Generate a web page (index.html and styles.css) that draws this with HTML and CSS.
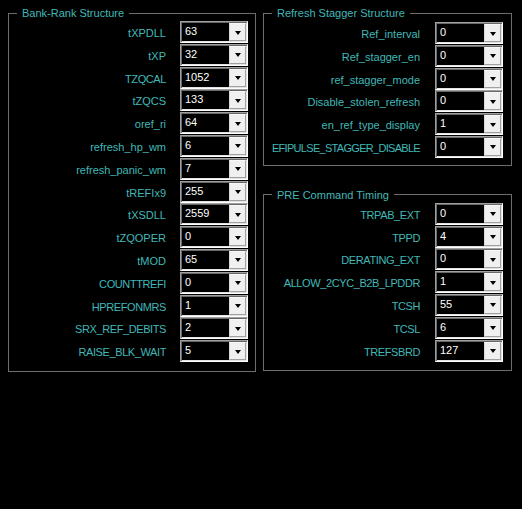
FILE: index.html
```html
<!DOCTYPE html>
<html>
<head>
<meta charset="utf-8">
<link rel="stylesheet" href="styles.css">
</head>
<body>
<div class="page">
  <fieldset class="group group-left">
    <legend>Bank-Rank Structure</legend>
    <div class="row"><span class="label">tXPDLL</span><div class="combo"><span class="value">63</span><span class="btn"><i class="tri"></i></span></div></div>
    <div class="row"><span class="label">tXP</span><div class="combo"><span class="value">32</span><span class="btn"><i class="tri"></i></span></div></div>
    <div class="row"><span class="label caps">TZQCAL</span><div class="combo"><span class="value">1052</span><span class="btn"><i class="tri"></i></span></div></div>
    <div class="row"><span class="label">tZQCS</span><div class="combo"><span class="value">133</span><span class="btn"><i class="tri"></i></span></div></div>
    <div class="row"><span class="label">oref_ri</span><div class="combo"><span class="value">64</span><span class="btn"><i class="tri"></i></span></div></div>
    <div class="row"><span class="label">refresh_hp_wm</span><div class="combo"><span class="value">6</span><span class="btn"><i class="tri"></i></span></div></div>
    <div class="row"><span class="label">refresh_panic_wm</span><div class="combo"><span class="value">7</span><span class="btn"><i class="tri"></i></span></div></div>
    <div class="row"><span class="label">tREFIx9</span><div class="combo"><span class="value">255</span><span class="btn"><i class="tri"></i></span></div></div>
    <div class="row"><span class="label">tXSDLL</span><div class="combo"><span class="value">2559</span><span class="btn"><i class="tri"></i></span></div></div>
    <div class="row"><span class="label">tZQOPER</span><div class="combo"><span class="value">0</span><span class="btn"><i class="tri"></i></span></div></div>
    <div class="row"><span class="label">tMOD</span><div class="combo"><span class="value">65</span><span class="btn"><i class="tri"></i></span></div></div>
    <div class="row"><span class="label caps">COUNTTREFI</span><div class="combo"><span class="value">0</span><span class="btn"><i class="tri"></i></span></div></div>
    <div class="row"><span class="label caps">HPREFONMRS</span><div class="combo"><span class="value">1</span><span class="btn"><i class="tri"></i></span></div></div>
    <div class="row"><span class="label caps">SRX_REF_DEBITS</span><div class="combo"><span class="value">2</span><span class="btn"><i class="tri"></i></span></div></div>
    <div class="row"><span class="label caps">RAISE_BLK_WAIT</span><div class="combo"><span class="value">5</span><span class="btn"><i class="tri"></i></span></div></div>
  </fieldset>
  <div class="col-right">
    <fieldset class="group group-stagger">
      <legend>Refresh Stagger Structure</legend>
      <div class="row"><span class="label">Ref_interval</span><div class="combo"><span class="value">0</span><span class="btn"><i class="tri"></i></span></div></div>
      <div class="row"><span class="label">Ref_stagger_en</span><div class="combo"><span class="value">0</span><span class="btn"><i class="tri"></i></span></div></div>
      <div class="row"><span class="label">ref_stagger_mode</span><div class="combo"><span class="value">0</span><span class="btn"><i class="tri"></i></span></div></div>
      <div class="row"><span class="label">Disable_stolen_refresh</span><div class="combo"><span class="value">0</span><span class="btn"><i class="tri"></i></span></div></div>
      <div class="row"><span class="label">en_ref_type_display</span><div class="combo"><span class="value">1</span><span class="btn"><i class="tri"></i></span></div></div>
      <div class="row"><span class="label caps caps-tight">EFIPULSE_STAGGER_DISABLE</span><div class="combo"><span class="value">0</span><span class="btn"><i class="tri"></i></span></div></div>
    </fieldset>
    <fieldset class="group group-pre">
      <legend>PRE Command Timing</legend>
      <div class="row"><span class="label caps">TRPAB_EXT</span><div class="combo"><span class="value">0</span><span class="btn"><i class="tri"></i></span></div></div>
      <div class="row"><span class="label caps">TPPD</span><div class="combo"><span class="value">4</span><span class="btn"><i class="tri"></i></span></div></div>
      <div class="row"><span class="label caps">DERATING_EXT</span><div class="combo"><span class="value">0</span><span class="btn"><i class="tri"></i></span></div></div>
      <div class="row"><span class="label caps">ALLOW_2CYC_B2B_LPDDR</span><div class="combo"><span class="value">1</span><span class="btn"><i class="tri"></i></span></div></div>
      <div class="row"><span class="label caps">TCSH</span><div class="combo"><span class="value">55</span><span class="btn"><i class="tri"></i></span></div></div>
      <div class="row"><span class="label caps">TCSL</span><div class="combo"><span class="value">6</span><span class="btn"><i class="tri"></i></span></div></div>
      <div class="row"><span class="label caps">TREFSBRD</span><div class="combo"><span class="value">127</span><span class="btn"><i class="tri"></i></span></div></div>
    </fieldset>
  </div>
</div>
</body>
</html>
```
FILE: styles.css
```css
html, body {
  margin: 0;
  padding: 0;
  background: #000;
}
body {
  width: 522px;
  height: 509px;
  font-family: "Liberation Sans", Arial, sans-serif;
  font-size: 11px;
  color: #40b8b8;
}
.page {
  display: flex;
  align-items: flex-start;
  gap: 7px;
  padding: 6px 0 0 8px;
}
.col-right {
  display: flex;
  flex-direction: column;
  gap: 22px;
}
.group {
  margin: 0;
  min-width: 0;
  box-sizing: border-box;
  border: 1px solid #6e6e6e;
  padding: 1px 7px 8px 0;
}
.group legend {
  margin-left: 8px;
  padding: 0 5px;
  line-height: 14px;
  height: 14px;
  color: #40b8b8;
}
.group-left {
  width: 248px;
}
.group-stagger,
.group-pre {
  width: 249px;
  padding-right: 8px;
}
.group-stagger {
  padding-top: 2px;
  padding-bottom: 6px;
}
.row {
  display: grid;
  grid-template-columns: 1fr 68px;
  column-gap: 14px;
  height: 22.8px;
  align-items: start;
}
.group-stagger .row,
.group-pre .row {
  column-gap: 15px;
}
.label {
  text-align: right;
  line-height: 22px;
  padding-top: 1px;
  white-space: nowrap;
}
.caps {
  letter-spacing: -0.4px;
}
.caps-tight {
  letter-spacing: -0.7px;
}
.combo {
  box-sizing: border-box;
  width: 68px;
  height: 22px;
  display: flex;
  background: #000;
  border: 1px solid;
  border-color: #a0a0a0 #ffffff #ffffff #a0a0a0;
  box-shadow: inset 1px 1px 0 #696969, inset -1px -1px 0 #e3e3e3;
  padding: 1px;
}
.value {
  flex: 1;
  color: #fff;
  padding-left: 3px;
  line-height: 16px;
}
.btn {
  box-sizing: border-box;
  width: 17px;
  height: 18px;
  background: #f0f0f0;
  border: 1px solid;
  border-color: #f8f8f8 #a0a0a0 #a0a0a0 #d8d8d8;
  display: flex;
  align-items: center;
  justify-content: center;
  padding-top: 1px;
}
.tri {
  display: block;
  width: 0;
  height: 0;
  border-left: 3.5px solid transparent;
  border-right: 3.5px solid transparent;
  border-top: 4px solid #000;
}
```
